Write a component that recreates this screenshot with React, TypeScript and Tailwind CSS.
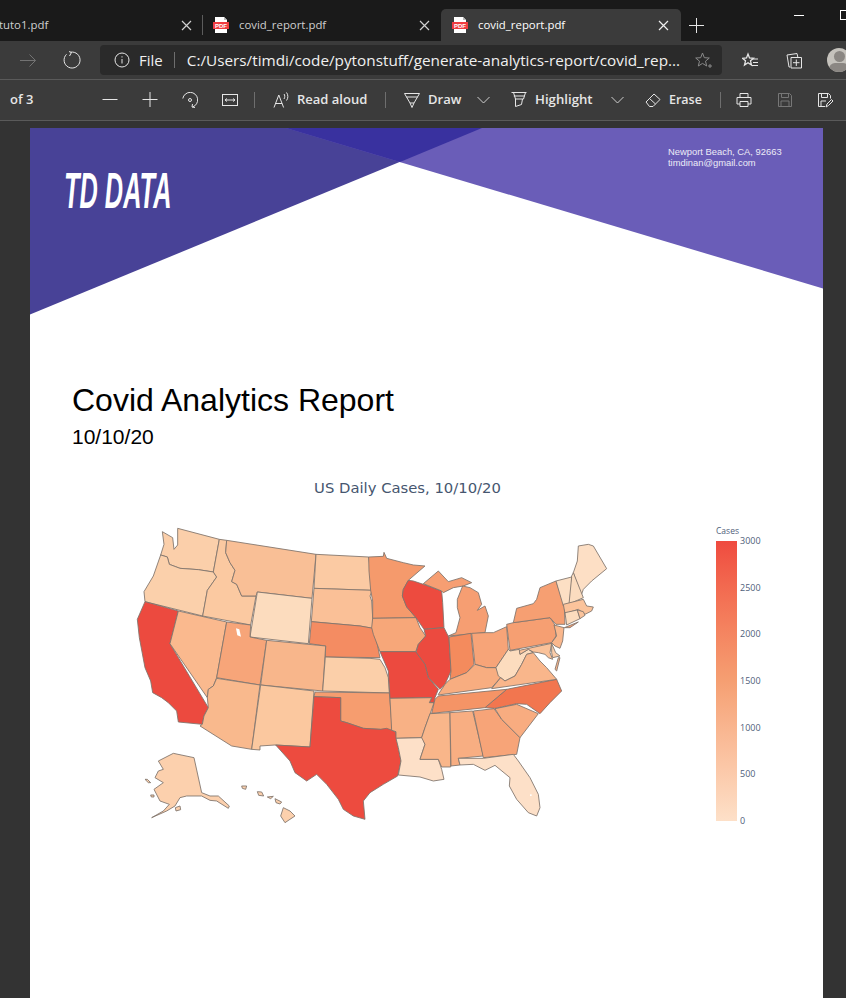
type State = { f: string; p: string };

// coordenadas tomadas a 3x, origen (130,520)
const west: State[] = [
  { f: "#fbcfaa", p: "143,22 268,55 250,153 205,146 150,142 118,130 112,108 92,102 102,70 97,32 128,50 132,85 143,72" },
  { f: "#fbd0ab", p: "92,102 112,108 118,130 150,142 205,146 250,153 260,168 232,208 218,285 45,242 42,212 70,165" },
  { f: "#fbc9a1", p: "268,55 290,58 287,95 300,125 315,148 305,182 320,190 335,225 378,225 372,258 362,312 218,285 232,208 260,168 250,153" },
  { f: "#f9bf96", p: "290,58 558,100 546,232 382,213 378,225 335,225 320,190 305,182 315,148 300,125 287,95" },
  { f: "#fcdcbe", p: "382,213 546,232 535,368 360,348" },
  { f: "#fbcaa3", p: "558,100 716,108 722,150 727,208 552,202" },
  { f: "#fac097", p: "552,202 727,208 720,225 725,240 730,322 705,318 690,315 544,302" },
  { f: "#f48c62", p: "544,302 690,315 730,322 740,360 750,410 586,408 587,375 538,368" },
  { f: "#ec4a3f", p: "45,242 145,270 120,368 235,560 222,585 217,610 145,603 140,570 115,545 95,530 68,515 62,480 45,440 28,350 22,295" },
  { f: "#fab98e", p: "145,270 290,303 260,470 250,495 235,505 232,530 120,368" },
  { f: "#f7a579", p: "290,303 362,312 360,348 410,358 390,492 260,470" },
  { f: "#f8b68b", p: "410,358 587,375 578,510 392,492" },
  { f: "#f9b98d", p: "260,472 390,492 365,685 305,675 210,615 217,610 222,585 235,560 232,530 235,505 250,495" },
  { f: "#fbc89f", p: "392,492 552,510 540,678 435,672 390,675 390,687 365,685" },
  { f: "#fbcfa9", p: "586,408 720,412 750,415 765,440 775,470 778,516 578,510" },
  { f: "#f69d6f", p: "555,513 778,516 785,600 787,640 750,625 700,622 650,605 632,600 632,530 552,527" },
  { f: "#ed4b3f", p: "552,527 632,530 632,600 650,605 700,622 750,625 770,622 797,632 805,680 813,720 803,765 760,790 720,815 700,840 705,895 670,885 640,865 625,835 590,790 560,760 530,780 495,755 480,720 437,672 540,678" },
  { f: "#fcd0ad", p: "130,697 192,710 215,815 240,825 265,825 298,855 295,862 260,840 240,838 215,825 170,825 150,830 135,855 110,870 65,890 100,870 118,850 90,840 72,805 100,785 75,770 85,750 100,745 85,720" },
  { f: "#fcd0ad", p: "45,775 52,775 62,785 55,785" },
  { f: "#fcd0ad", p: "62,822 72,822 72,828 64,828" },
  { f: "#fcd0ad", p: "136,860 150,855 152,866 138,870" },
  { f: "#fcd0ad", p: "335,795 350,795 347,805 337,802" },
  { f: "#fcd0ad", p: "382,812 395,813 401,825 386,823" },
  { f: "#fcd0ad", p: "412,828 430,826 422,833" },
  { f: "#fcd0ad", p: "435,833 455,843 450,849 438,845" },
  { f: "#fcd0ad", p: "460,860 480,870 495,885 465,905 452,885" },
];

// coordenadas tomadas a 3x, origen (370,520)
const east: State[] = [
  { f: "#f59a6c", p: "-4,108 40,106 42,94 50,112 100,125 130,132 165,135 115,178 100,205 97,225 110,258 138,290 8,292 8,240 2,208 -3,150" },
  { f: "#f7a779", p: "8,292 138,290 150,320 167,345 145,370 137,392 30,392 10,340 5,320" },
  { f: "#ed4b3f", p: "115,178 130,180 160,190 215,210 218,245 222,320 162,325 138,290 110,258 97,225 100,205" },
  { f: "#f69e72", p: "160,188 205,150 235,182 275,170 305,185 280,195 250,200 220,215 215,210" },
  { f: "#f69e72", p: "262,235 278,195 300,200 325,215 335,250 322,268 345,255 355,285 345,335 235,345 258,335 270,290 262,260" },
  { f: "#ec4a3f", p: "162,325 222,320 237,350 243,450 225,490 210,505 195,490 175,470 165,430 138,395 145,370 167,345" },
  { f: "#f48b5d", p: "237,348 303,337 312,430 290,455 240,475 243,450" },
  { f: "#f7a478", p: "305,337 345,335 370,335 410,317 415,385 378,440 350,440 315,430" },
  { f: "#ec4a3f", p: "30,392 137,392 165,430 175,470 205,505 195,530 192,545 178,545 185,530 60,532 55,450" },
  { f: "#f8b185", p: "60,532 185,530 178,545 192,545 180,580 165,620 155,650 78,652 78,632 65,628" },
  { f: "#fde0c8", p: "78,652 158,650 165,670 150,715 205,715 215,745 222,775 190,780 150,768 85,762 93,720 85,680" },
  { f: "#f9b68a", p: "180,578 240,575 242,738 215,738 205,715 150,715 165,670 155,650 165,620" },
  { f: "#f8ae82", p: "240,575 308,570 340,705 265,712 270,732 243,735" },
  { f: "#f7a478", p: "310,570 372,563 395,595 450,650 440,700 340,710" },
  { f: "#f8ac80", p: "375,563 440,550 505,578 450,650 395,595" },
  { f: "#f2764f", p: "345,560 410,505 560,475 575,510 540,545 510,578 470,550 440,548 375,562" },
  { f: "#f59466", p: "205,525 410,505 345,560 185,577 195,535" },
  { f: "#f8ad80", p: "205,520 225,490 240,475 290,455 315,430 350,440 378,440 392,470 365,500 205,522" },
  { f: "#fcdcbe", p: "378,440 415,385 420,390 448,385 450,400 475,385 490,395 470,400 455,430 435,465 405,480 385,465" },
  { f: "#f9b68b", p: "365,503 392,470 405,480 435,465 455,430 470,400 490,395 510,420 530,440 560,475" },
  { f: "#fac29a", p: "448,388 545,367 540,395 548,415 535,410 525,400 505,395 490,393 475,385 450,400" },
  { f: "#fbcdaa", p: "545,367 557,395 570,405 548,410 545,395" },
  { f: "#f9b68b", p: "565,410 570,410 560,450 555,445" },
  { f: "#f69f72", p: "410,310 430,305 540,290 555,312 558,345 545,365 420,388" },
  { f: "#f69f72", p: "430,305 440,262 490,248 500,235 510,200 558,180 583,255 585,310 558,310 540,290" },
  { f: "#f69f72", p: "583,320 625,303 600,320" },
  { f: "#fab78c", p: "552,312 582,320 578,360 570,382 555,375 545,365 560,345" },
  { f: "#fddfc5", p: "625,75 655,70 670,75 710,143 665,180 640,205 633,225 610,155 622,120" },
  { f: "#fbdcbf", p: "605,165 610,155 640,230 595,250 600,195" },
  { f: "#fcdfc4", p: "558,180 605,168 597,250 580,255" },
  { f: "#fbc39b", p: "580,250 640,235 650,255 670,258 665,270 645,280 625,265 585,278" },
  { f: "#fcdcbe", p: "585,275 622,267 630,293 590,312" },
  { f: "#fbc39b", p: "622,267 640,272 645,283 630,293" },
  { f: "#fde0c8", p: "265,712 340,712 430,700 445,720 480,770 505,820 510,860 500,885 475,875 440,835 418,795 420,770 375,733 345,748 310,730 270,732" },
];

const ticks = ["3000", "2500", "2000", "1500", "1000", "500", "0"];

function PdfIcon() {
  return (
    <svg width="16" height="16" viewBox="0 0 16 16" className="shrink-0">
      <path d="M2 0h9l3 3v13H2z" fill="#fff" />
      <path d="M11 0v3h3z" fill="#bbb" />
      <rect x="0" y="5" width="16" height="7" fill="#ef3b3f" />
      <text x="8" y="10.700" textAnchor="middle" fontSize="6" fontWeight="700" fill="#fff" fontFamily="Liberation Sans">PDF</text>
    </svg>
  );
}

function Ico({ children, w = 16, h = 16, c = "#e6e6e6" }: { children: React.ReactNode; w?: number; h?: number; c?: string }) {
  return (
    <svg width={w} height={h} viewBox={`0 0 ${w} ${h}`} fill="none" stroke={c} strokeWidth="1" className="shrink-0">
      {children}
    </svg>
  );
}

function CloseX({ c = "#d0d0d0" }: { c?: string }) {
  return (
    <Ico w={11} h={11} c={c}>
      <path d="M1 1l9 9M10 1l-9 9" strokeWidth="1.200" />
    </Ico>
  );
}

function Chevron() {
  return (
    <Ico w={13} h={16} c="#d0d0d0">
      <path d="M.5 5l6 6 6-6" />
    </Ico>
  );
}

function Sep() {
  return <div className="w-px h-[16px] bg-[#6e6e6e] shrink-0" />;
}

export default function App() {
  return (
    <div className="w-[846px] h-[998px] overflow-hidden flex flex-col bg-[#333333] font-['Open_Sans',sans-serif]">
      {/* Pestañas */}
      <div className="h-[41px] shrink-0 bg-[#1a1a1a] flex items-end text-[11.400px] text-[#cfcfcf]">
        <div className="w-[202px] h-[32px] flex items-center shrink-0 pr-[10px]">
          <span className="-ml-px flex-1">tuto1.pdf</span>
          <CloseX />
        </div>
        <div className="w-px h-[20px] bg-[#5c5c5c] mb-[6px] shrink-0" />
        <div className="w-[238px] h-[32px] flex items-center shrink-0 pl-[10px] pr-[11px]">
          <PdfIcon />
          <span className="ml-[10px] flex-1">covid_report.pdf</span>
          <CloseX />
        </div>
        <div className="w-[240px] h-[32px] flex items-center shrink-0 pl-[11px] pr-[12px] bg-[#3b3b3b] rounded-t-[5px] text-white">
          <PdfIcon />
          <span className="ml-[10px] flex-1">covid_report.pdf</span>
          <CloseX c="#f0f0f0" />
        </div>
        <div className="h-[32px] flex items-center ml-[8px] shrink-0">
          <Ico w={15} h={15}>
            <path d="M0 7.500h15M7.500 0v15" />
          </Ico>
        </div>
        <div className="h-[41px] flex items-start pt-[15px] ml-[90px] shrink-0">
          <div className="w-[10px] h-px bg-white" />
        </div>
        <div className="h-[41px] flex items-start pt-[10px] ml-[36px] shrink-0">
          <div className="w-[10px] h-[10px] border border-white shrink-0" />
        </div>
      </div>

      {/* Barra de dirección */}
      <div className="h-[39px] shrink-0 bg-[#3b3b3b] border-b border-[#5a5a5a] flex items-center">
        <div className="ml-[20px] shrink-0">
          <Ico h={17} c="#737373">
            <path d="M0 8.500h15.500M9.500 2.500l6 6-6 6" />
          </Ico>
        </div>
        <div className="ml-[27px] shrink-0">
          <Ico w={18} h={18}>
            <path d="M7.500 1.200A8 8 0 1 1 3.500 3.300M6 .5l2.500 1L6.500 5" />
          </Ico>
        </div>
        <div className="ml-[19px] w-[622px] h-[30px] bg-[#2a2a2a] rounded-[4px] flex items-center shrink-0 text-[#f0f0f0]">
          <div className="ml-[14px] shrink-0">
            <Ico>
              <circle cx="8" cy="8" r="7" />
              <path d="M8 7v4.500M8 4.300v1.200" />
            </Ico>
          </div>
          <span className="ml-[9px] text-[15px]">File</span>
          <div className="w-px h-[16px] bg-[#6e6e6e] ml-[11px] shrink-0" />
          <span className="ml-[12px] w-[495px] text-[15.300px] whitespace-nowrap overflow-hidden">C:/Users/timdi/code/pytonstuff/generate-analytics-report/covid_rep...</span>
          <div className="ml-[13px] shrink-0">
            <Ico w={17} h={17} c="#8a8a8a">
              <path d="M7.500 1l1.800 4.700 5 .3-3.800 3.200 1.200 4.800-4.200-2.600L3.300 14l1.200-4.800L.7 6l5-.3z" />
              <path d="M13 14h4M15 12v4" />
            </Ico>
          </div>
        </div>
        <div className="ml-[20px] shrink-0">
          <Ico w={17} h={17}>
            <path d="M6 2l1.500 4 4 .3-3 2.500 1 4.200-3.500-2.300-3.500 2.300 1-4.200-3-2.500 4-.3z" strokeWidth="1.300" />
            <path d="M10 7h6M11 10.500h5M10 13.500h6" />
          </Ico>
        </div>
        <div className="ml-[27px] shrink-0">
          <Ico w={17} h={17}>
            <path d="M4 15H3L1 3l10-1.500.8 3.500" />
            <path d="M5 5.500h10.500V16H5zM10.300 7.500v6.500M7 10.700h6.500" />
          </Ico>
        </div>
        <div className="ml-[24px] w-[24px] h-[24px] rounded-full bg-[#c5c2bc] shrink-0 overflow-hidden flex flex-col items-center">
          <div className="w-[11px] h-[11px] rounded-full bg-[#8b8783] mt-[3px] shrink-0" />
          <div className="w-[20px] h-[12px] rounded-full bg-[#8b8783] mt-px shrink-0" />
        </div>
      </div>

      {/* Barra del visor PDF */}
      <div className="h-[41px] shrink-0 bg-[#3b3b3b] border-b border-[#5a5a5a] flex items-center text-[13px] font-semibold text-[#e6e6e6]">
        <span className="ml-[10px] w-[21px] whitespace-nowrap">of 3</span>
        <div className="ml-[71px] shrink-0">
          <Ico>
            <path d="M.5 7.500h15" />
          </Ico>
        </div>
        <div className="ml-[24px] shrink-0">
          <Ico>
            <path d="M.5 7.500h15M8 0v15" />
          </Ico>
        </div>
        <div className="ml-[24px] shrink-0">
          <Ico>
            <path d="M.8 6.500A7.500 7.500 0 1 1 10.500 15M13 15.500l-3-.5.5-3" />
            <circle cx="8" cy="8" r="1.500" />
          </Ico>
        </div>
        <div className="ml-[24px] shrink-0">
          <Ico>
            <rect x=".5" y="2.500" width="15" height="11" />
            <path d="M3 8h10M3 8l2-1.500M3 8l2 1.500M13 8l-2-1.500M13 8l-2 1.500" />
          </Ico>
        </div>
        <div className="ml-[16px]"><Sep /></div>
        <div className="ml-[18px] shrink-0">
          <Ico w={18} h={18}>
            <path d="M1 16.500L5.800 4l4.800 12.500M2.600 12.500h6.500M11 3c1 1 1 3.500 0 5M13.500 1.500c1.800 2 1.800 6 0 8" />
          </Ico>
        </div>
        <span className="ml-[6px] w-[69px] whitespace-nowrap">Read aloud</span>
        <div className="ml-[19px]"><Sep /></div>
        <div className="ml-[18px] shrink-0">
          <Ico>
            <path d="M.5 1.500h15L10 11H6zM6 11l2 4.500 2-4.500M2.500 5h11" />
          </Ico>
        </div>
        <span className="ml-[8px] w-[32px]">Draw</span>
        <div className="ml-[17px] shrink-0"><Chevron /></div>
        <div className="ml-[21px] shrink-0">
          <Ico>
            <path d="M.5 .5h15M2.500 .5l2 6.500h8l2-6.500M2.800 4h11M4.500 7v7.500l6-2 1-5.500" />
          </Ico>
        </div>
        <span className="ml-[8px] w-[58px] whitespace-nowrap text-[13.200px]">Highlight</span>
        <div className="ml-[18px] shrink-0"><Chevron /></div>
        <div className="ml-[21px] shrink-0">
          <Ico>
            <path d="M1 10l8-8 6 5.500-7 7H4.500zM4.500 6.500l6 5.500" />
          </Ico>
        </div>
        <span className="ml-[8px] w-[32px] text-[12.500px]">Erase</span>
        <div className="ml-[19px]"><Sep /></div>
        <div className="ml-[15px] shrink-0">
          <Ico>
            <path d="M4 5V1.500h8V5M4 12H1V5.500h14V12h-3M4 9.500h8v5H4z" />
          </Ico>
        </div>
        <div className="ml-[25px] shrink-0">
          <Ico c="#777777">
            <path d="M1.500 1.500h11l2 2v11h-13zM4.500 1.500v4h7v-4M4 14.500V9h8v5.500" />
          </Ico>
        </div>
        <div className="ml-[24px] shrink-0">
          <Ico>
            <path d="M8 14.500H1.500v-13h10l2 2v3M4.500 1.500v4h6v-4M4 14V9h5" />
            <path d="M9 15l1-3 4.500-4.500 1.500 1.500-4.500 4.500z" />
          </Ico>
        </div>
      </div>

      {/* Hoja del informe */}
      <div className="flex-1 pt-[7px] pl-[30px]">
        <div className="relative w-[793px] h-[900px] bg-white font-['Liberation_Sans',sans-serif] text-black overflow-hidden">
          <svg width="793" height="187" viewBox="30 128 793 187" className="block">
            <polygon points="30,128 482,128 30,314.500" fill="#484297" />
            <polygon points="286,128 823,128 823,288.500" fill="#6a5db8" />
            <polygon points="286,128 482,128 400,162" fill="#39319f" />
          </svg>
          <div className="absolute left-[34px] top-[35px] text-[50px] leading-[56px] font-bold italic text-white whitespace-nowrap origin-left scale-x-[.507]">TD DATA</div>
          <div className="absolute left-[638px] top-[18px] text-[9.400px] leading-[11px] text-[#ecebf7]">
            <div>Newport Beach, CA, 92663</div>
            <div>timdinan@gmail.com</div>
          </div>

          <div className="pl-[42px] mt-[64px]">
            <h1 className="text-[32px] leading-[42px]">Covid Analytics Report</h1>
            <div className="text-[21px] leading-[30px] mt-px">10/10/20</div>
          </div>

          <div className="mt-[26px] text-center pr-[38px] text-[14.800px] leading-[20px] text-[#46566f] font-['DejaVu_Sans',sans-serif]">US Daily Cases, 10/10/20</div>

          <div className="flex items-start mt-[23px] pl-[100px]">
            <svg width="490" height="310" viewBox="130 520 490 310" className="shrink-0 block">
              <g transform="translate(130 520) scale(.33333)" stroke="#7f746c" strokeWidth="2.600" strokeLinejoin="round">
                {west.map((s, i) => (
                  <polygon key={i} points={s.p} fill={s.f} />
                ))}
                <polygon points="318,322 328,325 333,347 322,343" fill="#ffffff" stroke="none" />
              </g>
              <g transform="translate(370 520) scale(.33333)" stroke="#7f746c" strokeWidth="2.600" strokeLinejoin="round">
                {east.map((s, i) => (
                  <polygon key={i} points={s.p} fill={s.f} />
                ))}
                <rect x="480" y="820" width="5" height="5" fill="#ffffff" stroke="none" />
              </g>
            </svg>
            <div className="ml-[96px] shrink-0 font-['Open_Sans',sans-serif] text-[#50607a]">
              <div className="text-[8.500px] leading-[10px] h-[10px] mt-[5px] mb-[5px]">Cases</div>
              <div className="flex">
                <div className="w-[21px] h-[280px] bg-gradient-to-b from-[#ef4a3f] via-[#f59f72] to-[#fde0c8]" />
                <div className="ml-[3px] h-[290px] -mt-[5px] flex flex-col justify-between text-[9px] leading-[10px]">
                  {ticks.map((t) => (
                    <div key={t}>{t}</div>
                  ))}
                </div>
              </div>
            </div>
          </div>
        </div>
      </div>
    </div>
  );
}
